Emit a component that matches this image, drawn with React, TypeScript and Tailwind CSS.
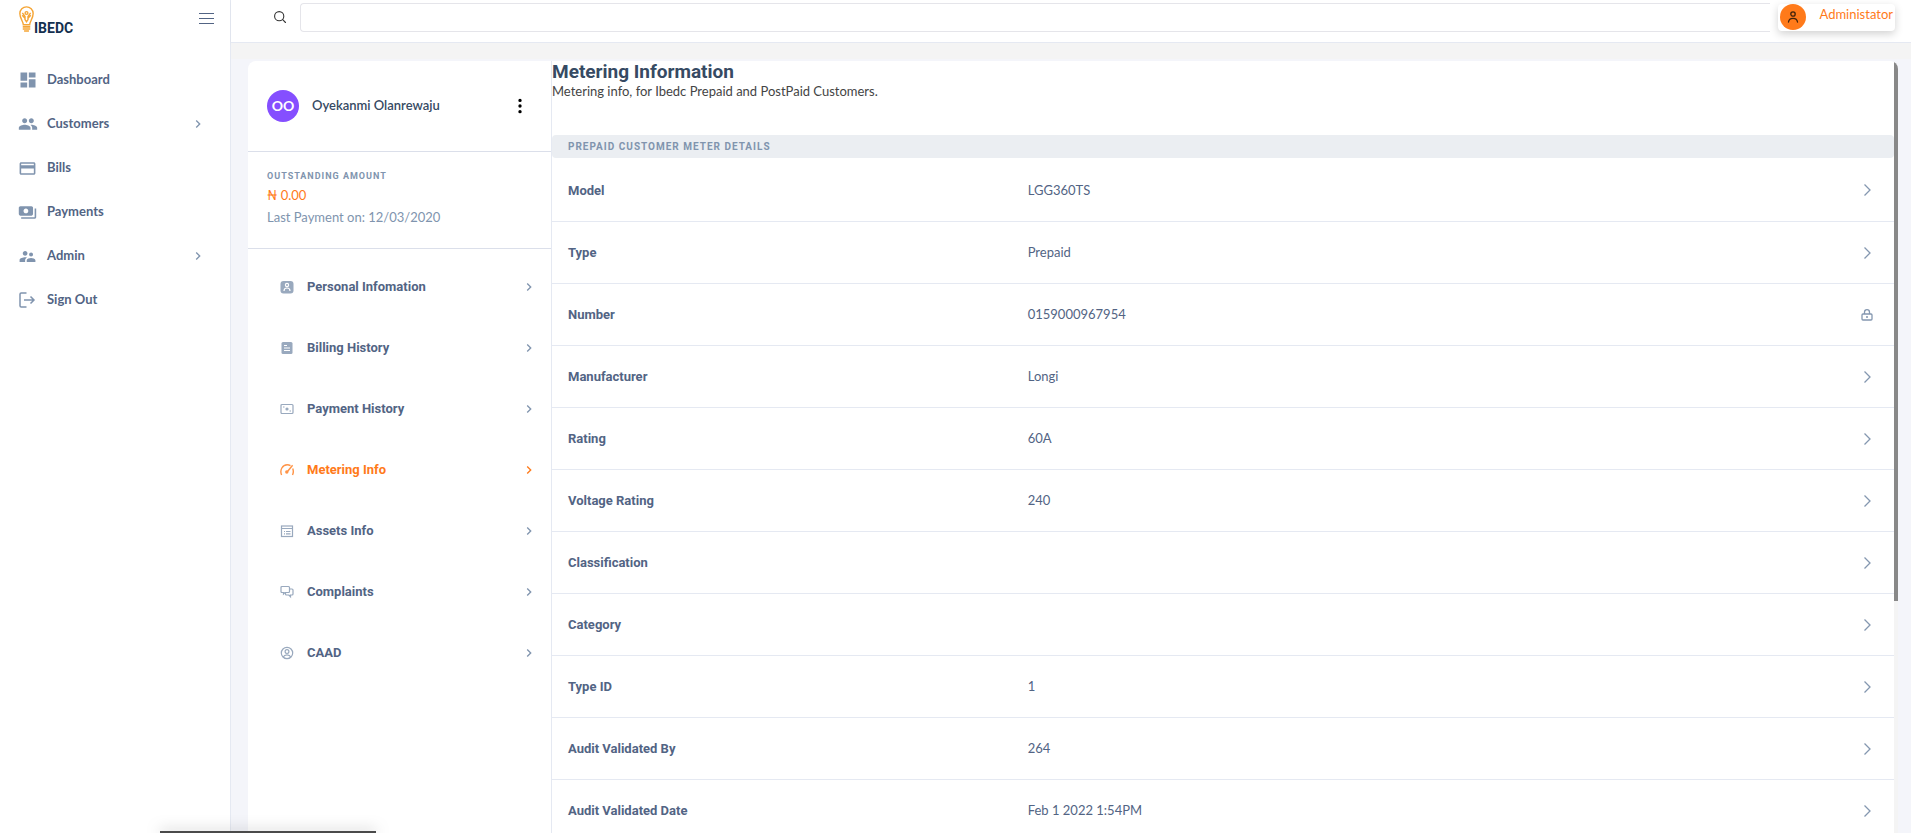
import type { ReactNode } from "react";
import {
  MdChevronRight,
  MdCreditCard,
  MdDashboard,
  MdPayments,
  MdPeople,
  MdSupervisorAccount,
} from "react-icons/md";
import { BsThreeDotsVertical } from "react-icons/bs";

const SignOutIcon = () => (
  <svg width="18" height="18" viewBox="0 0 18 18" fill="none" stroke="currentColor" strokeWidth="1.5">
    <path d="M8.5 2H3.2Q2 2 2 3.2v11.6Q2 16 3.2 16h5.3M6 9h10M12.5 5.5 16 9l-3.5 3.5" />
  </svg>
);

const Logo = () => (
  <svg width="15" height="28" viewBox="0 0 16 28" fill="none" stroke="#f5a535" strokeWidth="1.5">
    <path d="M4.6 20.2C4.6 16.6.9 13.4.9 8.2a7.1 7.1 0 0 1 14.2 0c0 5.200-3.700 8.400-3.700 12z" />
    <circle cx="8" cy="7.600" r="1.500" />
    <path d="M3.600 7.400 6.400 11.200v3.400L8 17l1.600-2.400v-3.400l2.800-3.800M3.400 10l2.800 3M12.600 10l-2.800 3" />
    <path d="M4 22.400h8M4 24.600h8M5.400 26.800h5.200" strokeWidth="1.700" />
  </svg>
);

type IconProps = { children: ReactNode };
const SmallIcon = ({ children }: IconProps) => (
  <svg width="14" height="14" viewBox="0 0 14 14" fill="none" stroke="currentColor" strokeWidth="1.200" className="opacity-80">
    {children}
  </svg>
);

const SearchIcon = () => (
  <svg width="14" height="14" viewBox="0 0 14 14" fill="none" stroke="#333" strokeWidth="1.1" strokeLinecap="round">
    <circle cx="6.200" cy="6.200" r="4.600" />
    <path d="m9.700 9.700 2.800 2.800" />
  </svg>
);

const PersonIcon = () => (
  <svg width="14" height="14" viewBox="0 0 14 14" fill="none" stroke="#40230c" strokeWidth="1.300" strokeLinecap="round">
    <circle cx="7" cy="4" r="2.200" />
    <path d="M2.500 12c.3-2.400 2-3.700 4.500-3.700s4.200 1.300 4.500 3.700" />
  </svg>
);

const LockIcon = () => (
  <svg width="12" height="12" viewBox="0 0 12 12" fill="none" stroke="#8497b0" strokeWidth="1.300">
    <rect x="1" y="5" width="10" height="6" rx="1" />
    <path d="M3.500 5V3.200a2.500 2.500 0 0 1 5 0V5M5 8h2" />
  </svg>
);

const RowChevron = () => (
  <svg width="12" height="12" viewBox="0 0 12 12" fill="none" stroke="#8497b0" strokeWidth="1.300">
    <path d="m3.500.5 5.500 5.500-5.500 5.500" />
  </svg>
);

const navItems = [
  { label: "Dashboard", icon: <MdDashboard size={20} />, more: false },
  { label: "Customers", icon: <MdPeople size={20} />, more: true },
  { label: "Bills", icon: <MdCreditCard size={19} />, more: false },
  { label: "Payments", icon: <MdPayments size={19} />, more: false },
  { label: "Admin", icon: <MdSupervisorAccount size={19} />, more: true },
  { label: "Sign Out", icon: <SignOutIcon />, more: false },
];

const sections = [
  {
    label: "Personal Infomation",
    icon: (
      <SmallIcon>
        <rect x=".5" y="1" width="13" height="12.500" rx="3" fill="currentColor" stroke="none" />
        <circle cx="7" cy="5" r="1.600" stroke="#fff" />
        <path d="M4 11c0-2 1.200-3 3-3s3 1 3 3" stroke="#fff" />
      </SmallIcon>
    ),
  },
  {
    label: "Billing History",
    icon: (
      <SmallIcon>
        <rect x="1.500" y="1" width="11" height="12" rx="1.500" fill="currentColor" stroke="none" />
        <path d="M4 4.500h3M4 7h6M4 9.500h6" stroke="#fff" strokeWidth="1" />
      </SmallIcon>
    ),
  },
  {
    label: "Payment History",
    icon: (
      <SmallIcon>
        <rect x="1" y="2.500" width="12" height="9" rx="1" />
        <circle cx="7" cy="7" r="1" fill="currentColor" />
        <path d="M3 5h1.500M9.500 9H11" />
      </SmallIcon>
    ),
  },
  {
    label: "Metering Info",
    icon: (
      <SmallIcon>
        <path d="M1.600 12C-.6 7 2.600 1.800 7.200 1.800c1.300 0 2.300.3 3.300.9M12.700 5.500c.9 2.200.8 4.400-.2 6.500" strokeWidth="1.400" />
        <path d="M7.500 8.500 12.600 2.200" strokeWidth="1.400" />
        <circle cx="6.800" cy="9" r="1.700" fill="currentColor" stroke="none" />
      </SmallIcon>
    ),
  },
  {
    label: "Assets Info",
    icon: (
      <SmallIcon>
        <rect x="1.500" y="2" width="11" height="10.500" />
        <path d="M1.500 4.500h11M4 7.500h1M6 7.500h4.500M4 9.800h1M6 9.800h4.500" />
      </SmallIcon>
    ),
  },
  {
    label: "Complaints",
    icon: (
      <SmallIcon>
        <path d="M2 1.500h6.500q1 0 1 1v4q0 1-1 1H5L3.500 9V7.500H2q-1 0-1-1v-4q0-1 1-1z" />
        <path d="M9.500 4H12q1 0 1 1v4q0 1-1 1h-1.500v1.700L8.800 10H6.500q-1 0-1-1V7.500" />
      </SmallIcon>
    ),
  },
  {
    label: "CAAD",
    icon: (
      <SmallIcon>
        <circle cx="7" cy="7" r="5.700" />
        <circle cx="7" cy="5.600" r="1.900" />
        <path d="M3.300 11c.6-1.500 1.900-2.200 3.700-2.200s3.100.7 3.700 2.200" />
      </SmallIcon>
    ),
  },
];

const meter = [
  ["Model", "LGG360TS"],
  ["Type", "Prepaid"],
  ["Number", "0159000967954"],
  ["Manufacturer", "Longi"],
  ["Rating", "60A"],
  ["Voltage Rating", "240"],
  ["Classification", ""],
  ["Category", ""],
  ["Type ID", "1"],
  ["Audit Validated By", "264"],
  ["Audit Validated Date", "Feb 1 2022 1:54PM"],
];

export default function App() {
  return (
    <div className="flex h-screen overflow-hidden bg-[#f4f5fa] font-['Lato',sans-serif] text-[13px] text-[#526484]">
      <aside className="w-[231px] shrink-0 border-r border-[#e5e9f2] bg-white">
        <div className="flex h-[42px] items-start justify-between pt-[5px] pr-4 pl-[19px]">
          <a href="#" className="flex items-end text-[#14304f]">
            <Logo />
            <span className="font-['Roboto',sans-serif] text-sm leading-[10px] font-bold">IBEDC</span>
          </a>
          <button aria-label="Toggle menu" className="mt-2 flex w-[15px] flex-col gap-1 text-[#526484]">
            <span className="h-px w-full bg-current" />
            <span className="h-px w-full bg-current" />
            <span className="h-px w-full bg-current" />
          </button>
        </div>
        <nav className="flex flex-col pt-4">
          {navItems.map((item) => (
            <a key={item.label} href="#" className="flex h-11 items-center pr-6 pl-[18px] font-bold">
              <span className="flex w-[29px] items-center text-[#8094ae]">{item.icon}</span>
              <span className="grow">{item.label}</span>
              {item.more && <MdChevronRight size={16} className="stroke-current text-[#8094ae]" />}
            </a>
          ))}
        </nav>
      </aside>

      <div className="flex min-w-0 grow flex-col">
        <header className="flex h-[43px] shrink-0 items-start border-b border-[#e5e9f2] bg-white pt-[3px] pr-4 pl-[42px] shadow-xs">
          <label htmlFor="search" aria-label="Search" className="mt-[7px] mr-[13px]">
            <SearchIcon />
          </label>
          <input
            id="search"
            aria-label="Search"
            className="h-[29px] grow rounded-l-sm border border-r-0 border-[#e5e5ea] px-3 outline-none"
          />
          <button className="mt-px ml-2 flex h-[27px] items-start gap-[13px] rounded-sm bg-white px-[2px] text-[#ff7a1a] shadow-[0_3px_8px_rgba(0,0,0,0.18)]">
            <span className="flex size-[26px] items-center justify-center rounded-full bg-[#ff7a1a]">
              <PersonIcon />
            </span>
            <span className="leading-5">Administator</span>
          </button>
        </header>
        <div className="h-4 shrink-0 bg-[#f4f4f4]" />

        <main className="flex min-h-0 grow pt-[2px] pr-[13px] pl-[17px]">
          <div className="flex min-w-0 grow overflow-hidden rounded-t-lg bg-white">
            <aside className="w-[304px] shrink-0 border-r border-[#e5e9f2]">
              <div className="flex h-[91px] items-center border-b border-[#dbdfea] pr-[22px] pl-[19px]">
                <span className="flex size-8 items-center justify-center rounded-full bg-[#854fff] text-sm font-bold text-white">
                  OO
                </span>
                <span className="ml-[13px] grow font-semibold text-[#364a63]">Oyekanmi Olanrewaju</span>
                <button aria-label="More options" className="text-black">
                  <BsThreeDotsVertical size={18} />
                </button>
              </div>
              <div className="h-[97px] border-b border-[#dbdfea] pt-4 pl-[19px]">
                <h6 className="font-['Roboto',sans-serif] text-[9px] leading-4 font-bold tracking-[1px] text-[#8094ae]">
                  OUTSTANDING AMOUNT
                </h6>
                <p className="leading-[22px] text-[#ff7a1a]">₦ 0.00</p>
                <p className="leading-[22px] text-[#8094ae]">Last Payment on: 12/03/2020</p>
              </div>
              <nav className="flex flex-col pt-[7px]">
                {sections.map((s) => (
                  <a
                    key={s.label}
                    href="#"
                    className={
                      s.label === "Metering Info"
                        ? "flex h-[61px] items-center pr-[14px] pl-8 text-[#ff7a1a]"
                        : "flex h-[61px] items-center pr-[14px] pl-8 text-[#8094ae]"
                    }
                  >
                    <span className="w-[27px]">{s.icon}</span>
                    <span
                      className={
                        s.label === "Metering Info"
                          ? "grow font-['Roboto',sans-serif] font-bold"
                          : "grow font-['Roboto',sans-serif] font-bold text-[#526484]"
                      }
                    >
                      {s.label}
                    </span>
                    <MdChevronRight size={16} />
                  </a>
                ))}
              </nav>
            </aside>

            <section className="min-w-0 grow">
              <h4 className="font-['Roboto',sans-serif] text-[19px] leading-[21px] font-bold text-[#364a63]">
                Metering Information
              </h4>
              <p className="leading-[18px] text-[#444]">Metering info, for Ibedc Prepaid and PostPaid Customers.</p>
              <h6 className="mt-[35px] rounded-sm bg-[#ebeef2] px-4 font-['Roboto',sans-serif] text-[10px] leading-[23px] font-bold tracking-[1px] text-[#8094ae]">
                PREPAID CUSTOMER METER DETAILS
              </h6>
              <table className="mt-px w-full table-fixed border-collapse text-left">
                <tbody>
                  {meter.map(([label, value]) => (
                    <tr key={label} className="h-[62px] border-b border-[#e5e9f2]">
                      <th scope="row" className="w-[35%] pt-[2px] pl-4 font-['Roboto',sans-serif] font-bold">
                        {label}
                      </th>
                      <td className="pt-[2px] pl-[6px]">{value}</td>
                      <td className="w-16 pt-px">
                        <button aria-label={label === "Number" ? "Locked" : "Edit " + label} className="ml-[31px] flex">
                          {label === "Number" ? <LockIcon /> : <RowChevron />}
                        </button>
                      </td>
                    </tr>
                  ))}
                </tbody>
              </table>
            </section>
            <div className="w-1 shrink-0 bg-[#f4f4f4]">
              <div className="h-[70%] bg-[#888]" />
            </div>
          </div>
        </main>
      </div>

      <div className="fixed bottom-0 left-40 h-[2px] w-[216px] bg-[#4a4a4a] shadow-[0_0_14px_rgba(0,0,0,0.5)]" />
    </div>
  );
}
